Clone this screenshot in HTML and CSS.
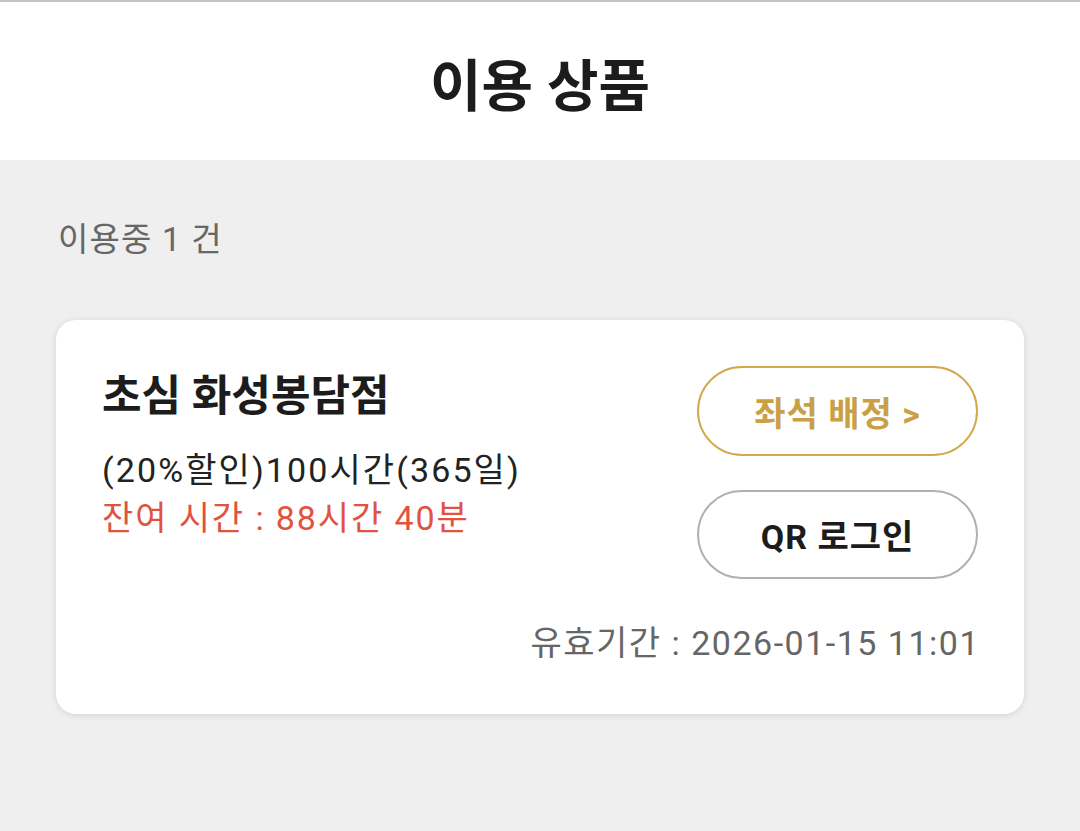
FILE: index.html
```html
<!DOCTYPE html>
<html lang="ko">
<head>
    <meta charset="UTF-8">
    <meta name="viewport" content="width=device-width, initial-scale=1.0">
    <title>이용 상품</title>
    <link rel="stylesheet" href="styles.css">
</head>
<body>
    <!-- Page header -->
    <header class="topbar">
        <h1 class="topbar-title">이용 상품</h1>
    </header>

    <main class="content">
        <p class="count">이용중 1 건</p>

        <!-- Product card -->
        <div class="card">
            <div class="card-row">
                <div class="card-info">
                    <h2 class="store">초심 화성봉담점</h2>
                    <p class="plan">(20%할인)100시간(365일)</p>
                    <p class="remain">잔여 시간 : 88시간 40분</p>
                </div>
                <div class="card-actions">
                    <button class="btn btn-seat">좌석 배정 &gt;</button>
                    <button class="btn btn-qr">QR 로그인</button>
                </div>
            </div>
            <p class="expire">유효기간 : 2026-01-15 11:01</p>
        </div>
    </main>
</body>
</html>
```

FILE: styles.css
```css
html, body {
    margin: 0;
    height: 100%;
    background-color: #efefef;
    font-family: Roboto, "Noto Sans CJK KR", sans-serif;
}

/* Header */
.topbar {
    height: 158px;
    border-top: 2px solid #c4c4c4;
    background-color: #ffffff;
    display: flex;
    align-items: center;
    justify-content: center;
}

.topbar-title {
    margin: 0;
    font-size: 56px;
    font-weight: bold;
    color: #1c1c1c;
}

/* Content area */
.content {
    padding: 0 56px;
}

.count {
    margin: 0;
    padding: 62px 0 0 2px;
    height: 98px;
    line-height: 36px;
    font-size: 33px;
    letter-spacing: 1.2px;
    color: #666666;
}

/* Card */
.card {
    background-color: #ffffff;
    border-radius: 20px;
    box-shadow: 0 1px 6px rgba(0, 0, 0, 0.12);
    padding: 48px 46px 47px 46px;
}

.card-row {
    display: flex;
    justify-content: space-between;
}

.store {
    margin: 0;
    font-size: 43px;
    line-height: 56px;
    font-weight: bold;
    color: #1c1c1c;
}

.plan {
    margin: 22px 0 0 0;
    font-size: 34px;
    line-height: 48px;
    letter-spacing: 2.1px;
    color: #222222;
}

.remain {
    margin: 0;
    font-size: 34px;
    line-height: 48px;
    letter-spacing: 1.9px;
    color: #e0533f;
}

.card-actions {
    display: flex;
    flex-direction: column;
    gap: 34px;
    margin-top: -2px;
}

.btn {
    width: 281px;
    height: 90px;
    border-radius: 45px;
    background-color: #ffffff;
    font-family: Roboto, "Noto Sans CJK KR", sans-serif;
    font-size: 34px;
    font-weight: bold;
    letter-spacing: 1px;
    cursor: pointer;
}

.btn-seat {
    border: 2px solid #d2a94c;
    color: #c9a046;
}

.btn-qr {
    height: 89px;
    border: 2px solid #b0b0b0;
    color: #1c1c1c;
}

.expire {
    margin: 40px -2px 0 0;
    text-align: right;
    font-size: 34px;
    line-height: 48px;
    letter-spacing: 1.5px;
    color: #666666;
}
```
